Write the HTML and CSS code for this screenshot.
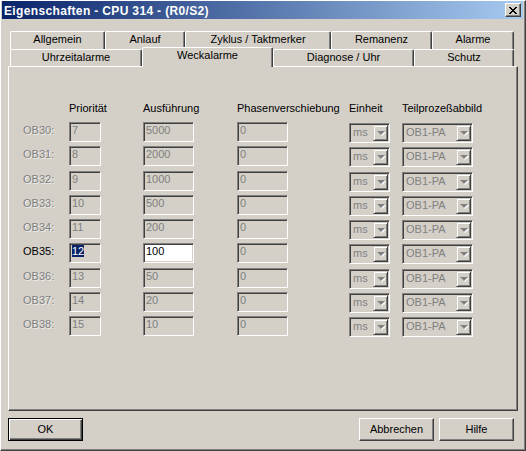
FILE: index.html
```html
<!DOCTYPE html>
<html>
<head>
<meta charset="utf-8">
<link rel="stylesheet" href="styles.css">
</head>
<body>
<div class="window">
  <div class="titlebar">
    <span class="title">Eigenschaften - CPU 314 - (R0/S2)</span>
    <span class="close">
      <svg width="8" height="7" viewBox="0 0 8 7" shape-rendering="crispEdges">
        <g fill="#000">
          <rect x="0" y="0" width="2" height="1"/><rect x="6" y="0" width="2" height="1"/>
          <rect x="1" y="1" width="2" height="1"/><rect x="5" y="1" width="2" height="1"/>
          <rect x="2" y="2" width="4" height="1"/>
          <rect x="3" y="3" width="2" height="1"/>
          <rect x="2" y="4" width="4" height="1"/>
          <rect x="1" y="5" width="2" height="1"/><rect x="5" y="5" width="2" height="1"/>
          <rect x="0" y="6" width="2" height="1"/><rect x="6" y="6" width="2" height="1"/>
        </g>
      </svg>
    </span>
  </div>
  <div class="body">
    <div class="tabrow back">
      <div class="tab w95">Allgemein</div>
      <div class="tab w80">Anlauf</div>
      <div class="tab w146">Zyklus / Taktmerker</div>
      <div class="tab w101">Remanenz</div>
      <div class="tab w82">Alarme</div>
    </div>
    <div class="tabrow front">
      <div class="tab w132">Uhrzeitalarme</div>
      <div class="tab w131 sel">Weckalarme</div>
      <div class="tab w141">Diagnose / Uhr</div>
      <div class="tab w100">Schutz</div>
    </div>
    <div class="panel">
      <div class="grid">
        <div></div>
        <div class="hdr">Priorität</div>
        <div class="hdr">Ausführung</div>
        <div class="hdr">Phasenverschiebung</div>
        <div class="hdr">Einheit</div>
        <div class="hdr">Teilprozeßabbild</div>

        <div class="lbl dis">OB30:</div>
        <div><div class="edit w32">7</div></div>
        <div><div class="edit w51">5000</div></div>
        <div><div class="edit w51">0</div></div>
        <div><div class="combo w41"><span class="ctext">ms</span><span class="cbtn"></span></div></div>
        <div><div class="combo w71"><span class="ctext">OB1-PA</span><span class="cbtn"></span></div></div>

        <div class="lbl dis">OB31:</div>
        <div><div class="edit w32">8</div></div>
        <div><div class="edit w51">2000</div></div>
        <div><div class="edit w51">0</div></div>
        <div><div class="combo w41"><span class="ctext">ms</span><span class="cbtn"></span></div></div>
        <div><div class="combo w71"><span class="ctext">OB1-PA</span><span class="cbtn"></span></div></div>

        <div class="lbl dis">OB32:</div>
        <div><div class="edit w32">9</div></div>
        <div><div class="edit w51">1000</div></div>
        <div><div class="edit w51">0</div></div>
        <div><div class="combo w41"><span class="ctext">ms</span><span class="cbtn"></span></div></div>
        <div><div class="combo w71"><span class="ctext">OB1-PA</span><span class="cbtn"></span></div></div>

        <div class="lbl dis">OB33:</div>
        <div><div class="edit w32">10</div></div>
        <div><div class="edit w51">500</div></div>
        <div><div class="edit w51">0</div></div>
        <div><div class="combo w41"><span class="ctext">ms</span><span class="cbtn"></span></div></div>
        <div><div class="combo w71"><span class="ctext">OB1-PA</span><span class="cbtn"></span></div></div>

        <div class="lbl dis">OB34:</div>
        <div><div class="edit w32">11</div></div>
        <div><div class="edit w51">200</div></div>
        <div><div class="edit w51">0</div></div>
        <div><div class="combo w41"><span class="ctext">ms</span><span class="cbtn"></span></div></div>
        <div><div class="combo w71"><span class="ctext">OB1-PA</span><span class="cbtn"></span></div></div>

        <div class="lbl">OB35:</div>
        <div><div class="edit w32 act"><span class="selt">12</span></div></div>
        <div><div class="edit w51 act white">100</div></div>
        <div><div class="edit w51">0</div></div>
        <div><div class="combo w41"><span class="ctext">ms</span><span class="cbtn"></span></div></div>
        <div><div class="combo w71"><span class="ctext">OB1-PA</span><span class="cbtn"></span></div></div>

        <div class="lbl dis">OB36:</div>
        <div><div class="edit w32">13</div></div>
        <div><div class="edit w51">50</div></div>
        <div><div class="edit w51">0</div></div>
        <div><div class="combo w41"><span class="ctext">ms</span><span class="cbtn"></span></div></div>
        <div><div class="combo w71"><span class="ctext">OB1-PA</span><span class="cbtn"></span></div></div>

        <div class="lbl dis">OB37:</div>
        <div><div class="edit w32">14</div></div>
        <div><div class="edit w51">20</div></div>
        <div><div class="edit w51">0</div></div>
        <div><div class="combo w41"><span class="ctext">ms</span><span class="cbtn"></span></div></div>
        <div><div class="combo w71"><span class="ctext">OB1-PA</span><span class="cbtn"></span></div></div>

        <div class="lbl dis">OB38:</div>
        <div><div class="edit w32">15</div></div>
        <div><div class="edit w51">10</div></div>
        <div><div class="edit w51">0</div></div>
        <div><div class="combo w41"><span class="ctext">ms</span><span class="cbtn"></span></div></div>
        <div><div class="combo w71"><span class="ctext">OB1-PA</span><span class="cbtn"></span></div></div>
      </div>
    </div>
    <div class="btnrow">
      <div class="btn default">OK</div>
      <div class="spacer"></div>
      <div class="btn">Abbrechen</div>
      <div class="btn">Hilfe</div>
    </div>
  </div>
</div>
</body>
</html>
```

FILE: styles.css
```css
* { box-sizing: border-box; }
html, body { margin: 0; padding: 0; }
body {
  width: 526px;
  height: 451px;
  overflow: hidden;
  background: #d4d0c8;
  font-family: "Liberation Sans", Arial, sans-serif;
  font-size: 11px;
  line-height: 13px;
  font-weight: 400;
  color: #000;
}
.window {
  width: 526px;
  height: 451px;
  background: #d4d0c8;
  border-top: 1px solid #fff;
  border-left: 1px solid #fff;
  border-right: 1px solid #404040;
  border-bottom: 1px solid #404040;
  box-shadow: inset -1px -1px #808080;
  padding: 0 2px 0 1px;
}
.titlebar {
  height: 18px;
  display: flex;
  align-items: flex-start;
  background: linear-gradient(to right, #0a246a, #a6caf0);
  padding: 0 2px 0 2px;
  color: #fff;
}
.title {
  padding-top: 3px;
  font-size: 12px;
  line-height: 14px;
  font-weight: bold;
  letter-spacing: 0.35px;
  white-space: nowrap;
}
.close {
  margin-left: auto;
  margin-top: 2px;
  width: 16px;
  height: 14px;
  background: #d4d0c8;
  border: 1px solid;
  border-color: #fff #404040 #404040 #fff;
  box-shadow: inset -1px -1px #808080;
  display: flex;
  align-items: center;
  justify-content: center;
}
.close svg { display: block; margin-left: -1px; }

.body {
  margin: 12px 0 0 6px;
  width: 510px;
}
.tabrow {
  display: flex;
  margin-left: 2px;
}
.tabrow.back { height: 18px; }
.tabrow.front { height: 17px; position: relative; z-index: 1; }
.tab {
  height: 100%;
  background: #d4d0c8;
  border-top: 1px solid #fff;
  border-left: 1px solid #fff;
  border-right: 1px solid #404040;
  box-shadow: inset -1px 0 #808080;
  border-radius: 2px 2px 0 0;
  text-align: center;
  padding-top: 1px;
  white-space: nowrap;
}
.tab.sel {
  height: 20px;
  margin-top: -2px;
}
.w95 { width: 95px; }
.w80 { width: 80px; }
.w146 { width: 146px; }
.w101 { width: 101px; }
.w82 { width: 82px; }
.w132 { width: 132px; }
.w131 { width: 131px; }
.w141 { width: 141px; }
.w100 { width: 100px; }

.panel {
  height: 345px;
  border: 1px solid;
  border-color: #fff #404040 #404040 #fff;
  box-shadow: inset -1px -1px #808080;
  padding: 35px 0 0 14px;
}
.grid {
  display: grid;
  grid-template-columns: 46px 74px 94px 112px 53px 71px;
  grid-template-rows: 20px repeat(9, 24.25px);
}
.hdr { white-space: nowrap; }
.lbl { padding-top: 2px; white-space: nowrap; }
.dis { color: #808080; text-shadow: 1px 1px 0 rgba(255,255,255,0.6); }

.edit {
  height: 20px;
  border: 1px solid;
  border-color: #808080 #fff #fff #808080;
  box-shadow: inset 1px 1px #404040, inset -1px -1px #d4d0c8;
  padding: 1px 2px;
  color: #808080;
  white-space: nowrap;
  overflow: hidden;
  background: #d4d0c8;
}
.edit.act { color: #000; }
.edit.white { background: #fff; }
.selt { background: #0a246a; color: #fff; }
.w32 { width: 32px; }
.w51 { width: 51px; }
.w41 { width: 41px; }
.w71 { width: 71px; }

.combo {
  margin-top: 1px;
  height: 20px;
  display: flex;
  border: 1px solid;
  border-color: #808080 #fff #fff #808080;
  box-shadow: inset 1px 1px #404040, inset -1px -1px #d4d0c8;
  padding: 1px;
  background: #d4d0c8;
  color: #808080;
}
.ctext {
  flex: 1;
  padding: 1px 0 0 2px;
  white-space: nowrap;
  overflow: hidden;
}
.cbtn {
  width: 15px;
  height: 16px;
  border: 1px solid;
  border-color: #d4d0c8 #404040 #404040 #d4d0c8;
  box-shadow: inset 1px 1px #fff, inset -1px -1px #808080;
  display: flex;
  align-items: center;
  justify-content: center;
}
.cbtn::after {
  content: "";
  width: 0;
  height: 0;
  border-left: 4px solid transparent;
  border-right: 4px solid transparent;
  border-top: 4px solid #808080;
  filter: drop-shadow(1px 1px 0 #fff);
}

.btnrow {
  display: flex;
  gap: 5px;
  margin-top: 7px;
  width: 506px;
  height: 23px;
}
.spacer { flex: 1; }
.btn {
  width: 75px;
  height: 23px;
  border: 1px solid;
  border-color: #fff #404040 #404040 #fff;
  box-shadow: inset -1px -1px #808080;
  background: #d4d0c8;
  display: flex;
  align-items: center;
  justify-content: center;
}
.btn.default {
  border: 1px solid #000;
  box-shadow: inset 1px 1px #fff, inset -1px -1px #404040, inset -2px -2px #808080;
}
```
